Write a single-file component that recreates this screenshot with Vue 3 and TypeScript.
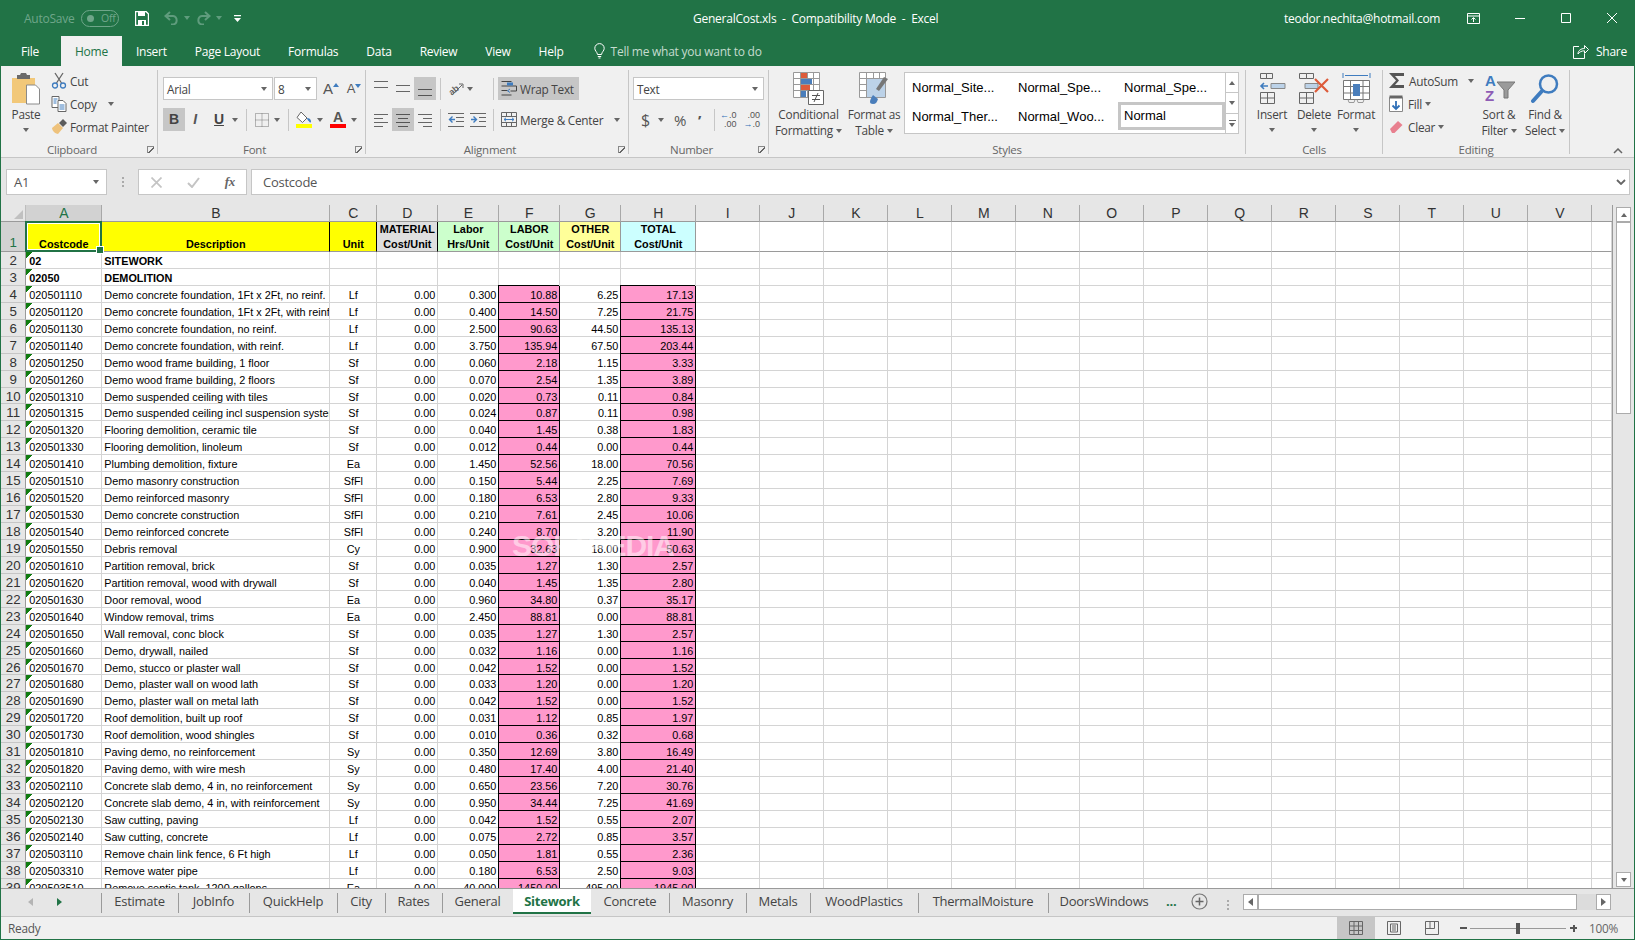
<template>
  <div class="app">
    <!-- title bar -->
    <header class="titlebar">
      <div class="qat">
        <span class="autosave">AutoSave</span>
        <span class="toggle"><i></i>Off</span>
        <svg class="save" width="14" height="15" viewBox="0 0 14 15"><path d="M.5.500h10.500l2.500 2.500v11.500h-13z" fill="none" stroke="#fff" stroke-width="1.400"/><path d="M3 1h7v4h-7zM3 9h8v5h-8z" fill="#fff"/><path d="M7 10h2v4h-2z" fill="#217346"/></svg>
        <svg class="undo" width="15" height="14" viewBox="0 0 15 14"><path d="M6 1L1.500 5 6 9M2 5h7a4.300 4.300 0 0 1 0 8.500H7" fill="none" stroke="#5f9c7d" stroke-width="2"/></svg>
        <i class="caret faded c1"></i>
        <svg class="redo" width="15" height="14" viewBox="0 0 15 14"><path d="M9 1l4.500 4L9 9M13 5H6a4.300 4.300 0 0 0 0 8.500h2" fill="none" stroke="#5f9c7d" stroke-width="2"/></svg>
        <i class="caret faded c2"></i>
        <svg class="customize" width="7" height="7" viewBox="0 0 7 7"><path d="M0 0h7v1.200H0zM0 3h7L3.500 7z" fill="#fff"/></svg>
      </div>
      <div class="doc-title">GeneralCost.xls&nbsp; - &nbsp;Compatibility Mode&nbsp; - &nbsp;Excel</div>
      <div class="win">
        <span class="email">teodor.nechita@hotmail.com</span>
        <svg class="disp" width="13" height="11" viewBox="0 0 13 11"><path d="M.5.500h12v10H.5zM.5 3h12M6.500 9V5M4.500 6.500l2-2 2 2" fill="none" stroke="#fff"/></svg>
        <svg class="wmin" width="10" height="1" viewBox="0 0 10 1"><path d="M0 .5h10" stroke="#fff"/></svg>
        <svg class="wmax" width="10" height="10" viewBox="0 0 10 10"><path d="M.5.500h9v9h-9z" fill="none" stroke="#fff"/></svg>
        <svg class="wclose" width="10" height="10" viewBox="0 0 10 10"><path d="M0 0l10 10M10 0L0 10" stroke="#fff"/></svg>
      </div>
    </header>

    <!-- ribbon tabs -->
    <nav class="tabs">
      <span class="tab first">File</span>
      <span class="tab active">Home</span>
      <span v-for="t in ribbonTabs" :key="t" class="tab">{{ t }}</span>
      <svg class="bulb" width="11" height="16" viewBox="0 0 11 16"><path d="M3.500 11.500C3 8.500.8 8 .8 5.300a4.700 4.700 0 0 1 9.400 0c0 2.700-2.200 3.200-2.700 6.200zM3.800 13.500h3.400M4.500 15h2" fill="none" stroke="#fff" stroke-width="1"/></svg>
      <span class="tellme">Tell me what you want to do</span>
      <span class="share">
        <svg width="16" height="15" viewBox="0 0 16 15"><path d="M6 2.500H.5v12h11V10M5 10c0-3.500 3-5.500 6.500-5.500V1.500l4 4-4 4V6.800C8.500 6.800 6.500 8 5 10z" fill="none" stroke="#fff"/></svg>
        Share
      </span>
    </nav>

    <!-- ribbon -->
    <section class="ribbon">
      <div class="group g-clip">
        <div class="body">
          <div class="big paste">
            <svg width="30" height="33" viewBox="0 0 30 33"><path d="M1 6h23v25H1z" fill="#f2c879"/><path d="M6 3h3l1-2h5l1 2h3v4H6z" fill="#6a6a6a"/><path d="M15.500 13h9l4 4v15h-13z" fill="#fff" stroke="#8a8a8a"/></svg>
            <span class="lbl">Paste</span>
            <i class="caret"></i>
          </div>
          <div class="clip-col">
            <div class="small">
              <svg width="15" height="17" viewBox="0 0 15 17"><path d="M3.500 1l6.500 10M11.500 1L5 11" stroke="#666" stroke-width="1.300"/><circle cx="3.500" cy="13.500" r="2.500" fill="none" stroke="#3f7cbf" stroke-width="1.300"/><circle cx="11.500" cy="13.500" r="2.500" fill="none" stroke="#3f7cbf" stroke-width="1.300"/></svg>
              <span>Cut</span>
            </div>
            <div class="small">
              <svg width="15" height="16" viewBox="0 0 15 16"><path d="M.5.500h7v11h-7z" fill="#fff" stroke="#666"/><path d="M6.500 4.500h5l3 3v8h-8z" fill="#fff" stroke="#666"/><path d="M8 9h5M8 11h5M8 13h5M2 3h4M2 5h3M2 7h3" stroke="#3f7cbf"/></svg>
              <span>Copy</span><i class="caret copy-caret"></i>
            </div>
            <div class="small">
              <svg width="16" height="15" viewBox="0 0 16 15"><path d="M1 9l6-5 5 5-5 6C5 15 1 12 1 9z" fill="#eec27c"/><path d="M8 4l4-4 4 4-4 4z" fill="#5c5c5c"/></svg>
              <span>Format Painter</span>
            </div>
          </div>
        </div>
        <div class="glabel launchable">Clipboard<i class="launch"></i></div>
      </div>

      <div class="group g-font">
        <div class="body rows">
          <div class="row">
            <div class="select font-name"><span>Arial</span><i class="caret"></i></div>
            <div class="select font-size"><span>8</span><i class="caret"></i></div>
            <span class="grow">A<i class="tri-up"></i></span>
            <span class="shrink">A<i class="tri-down"></i></span>
          </div>
          <div class="row">
            <span class="tbtn on bold">B</span>
            <span class="tbtn ital">I</span>
            <span class="tbtn under">U</span>
            <i class="caret u-caret"></i>
            <i class="sep s1"></i>
            <svg class="borders" width="14" height="14" viewBox="0 0 14 14"><path d="M.5.500h13v13H.5zM.5 7h13M7 .5v13" fill="none" stroke="#777" stroke-dasharray="1 1"/></svg>
            <i class="caret b-caret"></i>
            <i class="sep s2"></i>
            <span class="fill">
              <svg width="16" height="12" viewBox="0 0 16 12"><path d="M5 0l6 6-4.500 4.500L1 5.500z" fill="#fff" stroke="#666"/><path d="M11 6c2 0 4 1 4 3.500 0 1-1 1.500-1.500.5S11 8 11 6z" fill="#3f7cbf"/></svg>
              <i class="bar yellow"></i>
            </span>
            <i class="caret f-caret"></i>
            <span class="fcolor">A<i class="bar red"></i></span>
            <i class="caret a-caret"></i>
          </div>
        </div>
        <div class="glabel launchable">Font<i class="launch"></i></div>
      </div>

      <div class="group g-align">
        <div class="body rows">
          <div class="row">
            <svg class="al a-l" width="14" height="23" viewBox="0 0 14 23"><path d="M0 4.500h14M0 10.500h14" stroke="#666"/></svg>
            <svg class="al a-m" width="14" height="23" viewBox="0 0 14 23"><path d="M0 8.500h14M0 14.500h14" stroke="#666"/></svg>
            <span class="hl a-b"><svg width="14" height="23" viewBox="0 0 14 23"><path d="M0 12.500h14M0 18.500h14" stroke="#555"/></svg></span>
            <i class="sep s3"></i>
            <svg class="orient" width="16" height="14" viewBox="0 0 16 14"><text x="1" y="12" transform="rotate(-40 5 9)" class="ab">ab</text><path d="M4 13L14 3M11 2h4v4" fill="none" stroke="#666"/></svg>
            <i class="caret o-caret"></i>
            <i class="sep s4"></i>
            <span class="wrap hl">
              <svg width="16" height="15" viewBox="0 0 16 15"><path d="M.5.500h10M.5 5h15v5h-6M.5 9.500h6M.5 14h10" fill="none" stroke="#444"/><path d="M6 1.500h6v3H6z" fill="#3f7cbf"/><path d="M9 8l-2.500 1.800L9 11.500" fill="none" stroke="#3f7cbf"/></svg>
              <span>Wrap Text</span>
            </span>
          </div>
          <div class="row">
            <svg class="al a-l" width="14" height="23" viewBox="0 0 14 23"><path d="M0 6.500h14M0 10.500h9M0 14.500h14M0 18.500h9" stroke="#666"/></svg>
            <span class="hl a-c"><svg width="14" height="23" viewBox="0 0 14 23"><path d="M0 6.500h14M2 10.500h10M0 14.500h14M2 18.500h10" stroke="#555"/></svg></span>
            <svg class="al a-r" width="14" height="23" viewBox="0 0 14 23"><path d="M0 6.500h14M5 10.500h9M0 14.500h14M5 18.500h9" stroke="#666"/></svg>
            <i class="sep s3b"></i>
            <svg class="ind i1" width="16" height="14" viewBox="0 0 16 14"><path d="M0 .5h16M8 4.500h8M8 8.500h8M0 13.500h16" stroke="#666"/><path d="M7 6.500H2M4.500 3.500L1.500 6.500l3 3" fill="none" stroke="#3f7cbf" stroke-width="1.400"/></svg>
            <svg class="ind i2" width="16" height="14" viewBox="0 0 16 14"><path d="M0 .5h16M9 4.500h7M9 8.500h7M0 13.500h16" stroke="#666"/><path d="M1 6.500h5M3.500 3.500l3 3-3 3" fill="none" stroke="#3f7cbf" stroke-width="1.400"/></svg>
            <i class="sep s4b"></i>
            <span class="merge">
              <svg width="16" height="15" viewBox="0 0 16 15"><path d="M.5.500h15v14H.5zM.5 4.500h15M.5 10.500h15M5.500.5v4M10.500.5v4M5.500 10.500v4M10.500 10.500v4" fill="none" stroke="#666"/><path d="M3 7.500h10M5 5.800L3 7.500l2 1.700M11 5.800l2 1.700-2 1.700" fill="none" stroke="#3f7cbf"/></svg>
              <span>Merge &amp; Center</span>
              <i class="caret m-caret"></i>
            </span>
          </div>
        </div>
        <div class="glabel launchable">Alignment<i class="launch"></i></div>
      </div>

      <div class="group g-num">
        <div class="body rows">
          <div class="row">
            <div class="select num-fmt"><span>Text</span><i class="caret"></i></div>
          </div>
          <div class="row">
            <span class="dollar">$</span>
            <i class="caret d-caret"></i>
            <span class="pct">%</span>
            <span class="comma">’</span>
            <i class="sep s5"></i>
            <span class="dec d1"><b>←</b>.0<br />.00</span>
            <span class="dec d2">.00<br /><b>→</b>.0</span>
          </div>
        </div>
        <div class="glabel launchable">Number<i class="launch"></i></div>
      </div>

      <div class="group g-styles">
        <div class="body">
          <div class="big cf">
            <svg width="31" height="33" viewBox="0 0 31 33"><path d="M.5.500h26v25H.5zM.5 6.500h26M.5 12.500h26M.5 18.500h26M7.500.5v25M14.500.5v25M20.500.5v25" fill="#fff" stroke="#999"/><path d="M8 1h6v5H8zM8 13h9v5H8z" fill="#dd5b3a"/><path d="M8 7h11v5H8zM8 19h5v6H8z" fill="#4a7ebb"/><path d="M15.500 18.500h15v14h-15z" fill="#fff" stroke="#666"/><path d="M19 23.500h8M19 27.500h8M25 21l-4 9" fill="none" stroke="#555"/></svg>
            <span class="lbl">Conditional</span>
            <span class="lbl">Formatting<i class="caret"></i></span>
          </div>
          <div class="big fat">
            <svg width="31" height="33" viewBox="0 0 31 33"><path d="M.5.500h26v25H.5zM.5 6.500h26M.5 12.500h26M.5 18.500h26M7.500.5v25M14.500.5v25M20.500.5v25" fill="#fff" stroke="#999"/><path d="M8 7h18v18H8z" fill="#bcd2e8"/><path d="M29 7L20 19l-3-2 8-12z" fill="#777"/><path d="M14 32c-4 0-4-3 0-9l5 4c-1 3-2 5-5 5z" fill="#4a7ebb"/></svg>
            <span class="lbl">Format as</span>
            <span class="lbl">Table<i class="caret"></i></span>
          </div>
          <div class="gallery">
            <div class="g-items">
              <span v-for="(s, i) in galleryStyles" :key="i" class="g-item" :class="{ selected: s === 'Normal' }">{{ s }}</span>
            </div>
            <div class="g-spin">
              <span><i class="tri-up gray"></i></span>
              <span><i class="tri-down gray"></i></span>
              <span class="more"><i class="more-line"></i><i class="tri-down gray"></i></span>
            </div>
          </div>
        </div>
        <div class="glabel">Styles</div>
      </div>

      <div class="group g-cells">
        <div class="body">
          <div class="big c-ins">
            <svg width="27" height="33" viewBox="0 0 27 33"><path d="M1.500 1.500h6v5h-6zM7.500 1.500h6v5h-6zM1.500 20.500h14v11h-14zM1.500 26h14M8.500 20.500v11" fill="none" stroke="#666"/><path d="M12 11.500h14v5H12z" fill="#bcd2e8" stroke="#888"/><path d="M9 14H2M5 11l-3 3 3 3" fill="none" stroke="#3f7cbf" stroke-width="1.600"/></svg>
            <span class="lbl">Insert</span>
            <i class="caret"></i>
          </div>
          <div class="big c-del">
            <svg width="31" height="33" viewBox="0 0 31 33"><path d="M.5 1.500h7v5h-7zM7.500 1.500h7v5h-7zM.5 20.500h14v11H.5zM.5 26h14M7.500 20.500v11" fill="none" stroke="#666"/><path d="M6 11.500h13v5H6z" fill="#bcd2e8" stroke="#888"/><path d="M16 7l13 13M29 7L16 20" stroke="#dd5b3a" stroke-width="2.200"/></svg>
            <span class="lbl">Delete</span>
            <i class="caret"></i>
          </div>
          <div class="big c-fmt">
            <svg width="29" height="33" viewBox="0 0 29 33"><path d="M1 1v5M28 1v5M3 3.500h23" stroke="#3f7cbf"/><path d="M1.500 8.500h26v19h-26zM1.500 14.500h26M1.500 21h26M8.500 8.500v19M21 8.500v19" fill="#fff" stroke="#777"/><path d="M11 12h7v12h-7z" fill="#4a7ebb"/><path d="M6 27.500l1 3h5l1-3M15 27.500l1 3h5l1-3" fill="none" stroke="#999"/></svg>
            <span class="lbl">Format</span>
            <i class="caret"></i>
          </div>
        </div>
        <div class="glabel">Cells</div>
      </div>

      <div class="group g-edit">
        <div class="body">
          <div class="edit-col">
            <div class="small">
              <svg width="15" height="15" viewBox="0 0 15 15"><path d="M15 3V0H0l7 7.500L0 15h15v-3H6l4-4.500L6 3z" fill="#555"/></svg>
              <span>AutoSum</span><i class="caret sum-caret"></i>
            </div>
            <div class="small">
              <svg width="14" height="17" viewBox="0 0 14 17"><path d="M.5 2.500h13v14H.5z" fill="#fff" stroke="#888"/><path d="M.5 .5h13v3H.5z" fill="#666"/><path d="M7 6v8M3.500 10.500L7 14l3.500-3.500" fill="none" stroke="#2f6fb7" stroke-width="1.800"/></svg>
              <span>Fill</span><i class="caret near"></i>
            </div>
            <div class="small">
              <svg width="14" height="14" viewBox="0 0 14 14"><path d="M1 9l8-8 4.500 4-8 8H3z" fill="#e8808f"/></svg>
              <span>Clear</span><i class="caret near"></i>
            </div>
          </div>
          <div class="big e-sort">
            <svg width="31" height="33" viewBox="0 0 31 33"><path d="M13 10h18l-7 8v8h-4v-8z" fill="#9a9a9a" stroke="#777"/><text x="1" y="14" class="az a">A</text><text x="1" y="29" class="az z">Z</text></svg>
            <span class="lbl">Sort &amp;</span>
            <span class="lbl">Filter<i class="caret"></i></span>
          </div>
          <div class="big e-find">
            <svg width="28" height="31" viewBox="0 0 28 31"><circle cx="17.500" cy="11" r="8.500" fill="none" stroke="#3f7cbf" stroke-width="2.500"/><path d="M11 18L2 28" stroke="#3f7cbf" stroke-width="4" stroke-linecap="round"/></svg>
            <span class="lbl">Find &amp;</span>
            <span class="lbl">Select<i class="caret"></i></span>
          </div>
        </div>
        <div class="glabel">Editing</div>
      </div>

      <div class="collapse">
        <svg width="10" height="6" viewBox="0 0 10 6"><path d="M1 5l4-4 4 4" fill="none" stroke="#666" stroke-width="1.500"/></svg>
      </div>
    </section>

    <!-- formula bar -->
    <div class="formula">
      <div class="namebox"><span>A1</span><i class="caret"></i></div>
      <span class="dots"></span>
      <div class="fx-box">
        <svg width="11" height="11" viewBox="0 0 11 11"><path d="M.5.500l10 10M10.500.5l-10 10" stroke="#c4c4c4" stroke-width="1.700"/></svg>
        <svg width="13" height="11" viewBox="0 0 13 11"><path d="M1 6l4 4 7-9" fill="none" stroke="#c4c4c4" stroke-width="2"/></svg>
        <span class="fx">fx</span>
      </div>
      <div class="finput"><span>Costcode</span>
        <svg width="10" height="6" viewBox="0 0 10 6"><path d="M1 1l4 4 4-4" fill="none" stroke="#666" stroke-width="1.800"/></svg>
      </div>
    </div>

    <!-- sheet -->
    <div class="sheet-wrap">
      <div class="sheet">
        <div class="grid">
          <div class="corner"><i></i></div>
          <div v-for="c in colNames" :key="c" class="colhead" :class="{ sel: c === 'A' }">{{ c }}</div>
          <div class="colhead blank"></div>

          <div class="rowhead r1 sel">1</div>
          <div
            v-for="h in headers"
            :key="h.col"
            class="cell head"
            :class="[h.cls, { 'active-cell': h.col === 'A' }]"
          >
            <span v-for="l in h.lines" :key="l">{{ l }}</span>
          </div>
          <div v-for="n in 15" :key="'h' + n" class="cell head"></div>

          <template v-for="(r, i) in rows" :key="r.code">
            <div class="rowhead">{{ i + 2 }}</div>
            <div class="cell code" :class="{ strong: r.bold }">{{ r.code }}</div>
            <div class="cell" :class="{ strong: r.bold }">{{ r.desc }}</div>
            <div class="cell center">{{ r.unit }}</div>
            <div class="cell num">{{ r.bold ? '' : '0.00' }}</div>
            <div class="cell num">{{ r.hrs }}</div>
            <div class="cell num" :class="{ pink: !r.bold }">{{ r.labor }}</div>
            <div class="cell num">{{ r.other }}</div>
            <div class="cell num" :class="{ pink: !r.bold }">{{ r.total }}</div>
            <div v-for="n in 15" :key="n" class="cell"></div>
          </template>
        </div>
        <div class="watermark">SOFTPEDIA</div>
      </div>
      <div class="vscroll">
        <span class="sbtn"><i class="tri-up gray"></i></span>
        <span class="vthumb"></span>
        <span class="vtrack"></span>
        <span class="sbtn"><i class="tri-down gray"></i></span>
      </div>
    </div>

    <!-- sheet tabs -->
    <div class="sheetbar">
      <div class="arrows"><i class="tri-left"></i><i class="tri-right"></i></div>
      <span
        v-for="t in sheets"
        :key="t.name"
        class="stab"
        :class="{ active: t.name === 'Sitework' }"
        :style="{ width: t.w + 'px' }"
      >{{ t.name }}</span>
      <span class="more-tabs">...</span>
      <span class="add">
        <svg width="17" height="17" viewBox="0 0 17 17"><circle cx="8.500" cy="8.500" r="7.500" fill="none" stroke="#777" stroke-width="1.200"/><path d="M4.500 8.500h8M8.500 4.500v8" stroke="#666" stroke-width="1.500"/></svg>
      </span>
      <span class="dots small-dots"></span>
      <div class="hscroll">
        <span class="sbtn"><i class="tri-left gray"></i></span>
        <span class="hthumb"></span>
        <span class="htrack"></span>
        <span class="sbtn last"><i class="tri-right gray"></i></span>
      </div>
    </div>

    <!-- status bar -->
    <footer class="status">
      <span class="ready">Ready</span>
      <span class="viewbtn on">
        <svg width="14" height="14" viewBox="0 0 14 14"><path d="M.5.500h13v13H.5zM.5 5h13M.5 9.500h13M5 .5v13M9.500.5v13" fill="none" stroke="#666"/></svg>
      </span>
      <span class="viewbtn">
        <svg width="14" height="14" viewBox="0 0 14 14"><path d="M.5.500h13v13H.5z" fill="none" stroke="#666"/><path d="M3.500 3v8h7V3zM5 5h4M5 7h4M5 9h4" fill="none" stroke="#666"/></svg>
      </span>
      <span class="viewbtn">
        <svg width="14" height="14" viewBox="0 0 14 14"><path d="M.5.500h13v13H.5zM.5 7.500h9V.5M5 .5v7" fill="none" stroke="#666"/></svg>
      </span>
      <span class="zminus"></span>
      <span class="slider"><i></i></span>
      <span class="zplus"></span>
      <span class="zoomtxt">100%</span>
    </footer>
  </div>
</template>

<script setup lang="ts">
interface SheetRow {
  code: string
  desc: string
  unit: string
  hrs: string
  labor: string
  other: string
  total: string
  bold?: boolean
}

const ribbonTabs = ['Insert', 'Page Layout', 'Formulas', 'Data', 'Review', 'View', 'Help']
const galleryStyles = ['Normal_Site...', 'Normal_Spe...', 'Normal_Spe...', 'Normal_Ther...', 'Normal_Woo...', 'Normal']
const colNames = 'ABCDEFGHIJKLMNOPQRSTUV'.split('')

const headers = [
  { col: 'A', cls: 'yellow', lines: ['Costcode'] },
  { col: 'B', cls: 'yellow dark', lines: ['Description'] },
  { col: 'C', cls: 'yellow dark', lines: ['Unit'] },
  { col: 'D', cls: 'grey', lines: ['MATERIAL', 'Cost/Unit'] },
  { col: 'E', cls: 'green', lines: ['Labor', 'Hrs/Unit'] },
  { col: 'F', cls: 'green', lines: ['LABOR', 'Cost/Unit'] },
  { col: 'G', cls: 'lemon', lines: ['OTHER', 'Cost/Unit'] },
  { col: 'H', cls: 'cyan', lines: ['TOTAL', 'Cost/Unit'] },
]

const data = `020501110|Demo concrete foundation, 1Ft x 2Ft, no reinf.|Lf|0.300|10.88|6.25|17.13
020501120|Demo concrete foundation, 1Ft x 2Ft, with reinf.|Lf|0.400|14.50|7.25|21.75
020501130|Demo concrete foundation, no reinf.|Lf|2.500|90.63|44.50|135.13
020501140|Demo concrete foundation, with reinf.|Lf|3.750|135.94|67.50|203.44
020501250|Demo wood frame building, 1 floor|Sf|0.060|2.18|1.15|3.33
020501260|Demo wood frame building, 2 floors|Sf|0.070|2.54|1.35|3.89
020501310|Demo suspended ceiling with tiles|Sf|0.020|0.73|0.11|0.84
020501315|Demo suspended ceiling incl suspension system|Sf|0.024|0.87|0.11|0.98
020501320|Flooring demolition, ceramic tile|Sf|0.040|1.45|0.38|1.83
020501330|Flooring demolition, linoleum|Sf|0.012|0.44|0.00|0.44
020501410|Plumbing demolition, fixture|Ea|1.450|52.56|18.00|70.56
020501510|Demo masonry construction|SfFl|0.150|5.44|2.25|7.69
020501520|Demo reinforced masonry|SfFl|0.180|6.53|2.80|9.33
020501530|Demo concrete construction|SfFl|0.210|7.61|2.45|10.06
020501540|Demo reinforced concrete|SfFl|0.240|8.70|3.20|11.90
020501550|Debris removal|Cy|0.900|32.63|18.00|50.63
020501610|Partition removal, brick|Sf|0.035|1.27|1.30|2.57
020501620|Partition removal, wood with drywall|Sf|0.040|1.45|1.35|2.80
020501630|Door removal, wood|Ea|0.960|34.80|0.37|35.17
020501640|Window removal, trims|Ea|2.450|88.81|0.00|88.81
020501650|Wall removal, conc block|Sf|0.035|1.27|1.30|2.57
020501660|Demo, drywall, nailed|Sf|0.032|1.16|0.00|1.16
020501670|Demo, stucco or plaster wall|Sf|0.042|1.52|0.00|1.52
020501680|Demo, plaster wall on wood lath|Sf|0.033|1.20|0.00|1.20
020501690|Demo, plaster wall on metal lath|Sf|0.042|1.52|0.00|1.52
020501720|Roof demolition, built up roof|Sf|0.031|1.12|0.85|1.97
020501730|Roof demolition, wood shingles|Sf|0.010|0.36|0.32|0.68
020501810|Paving demo, no reinforcement|Sy|0.350|12.69|3.80|16.49
020501820|Paving demo, with wire mesh|Sy|0.480|17.40|4.00|21.40
020502110|Concrete slab demo, 4 in, no reinforcement|Sy|0.650|23.56|7.20|30.76
020502120|Concrete slab demo, 4 in, with reinforcement|Sy|0.950|34.44|7.25|41.69
020502130|Saw cutting, paving|Lf|0.042|1.52|0.55|2.07
020502140|Saw cutting, concrete|Lf|0.075|2.72|0.85|3.57
020503110|Remove chain link fence, 6 Ft high|Lf|0.050|1.81|0.55|2.36
020503310|Remove water pipe|Lf|0.180|6.53|2.50|9.03
020503510|Remove septic tank, 1200 gallons|Ea|40.000|1450.00|495.00|1945.00`

const rows: SheetRow[] = [
  { code: '02', desc: 'SITEWORK', unit: '', hrs: '', labor: '', other: '', total: '', bold: true },
  { code: '02050', desc: 'DEMOLITION', unit: '', hrs: '', labor: '', other: '', total: '', bold: true },
  ...data.split('\n').map((line) => {
    const [code, desc, unit, hrs, labor, other, total] = line.split('|')
    return { code, desc, unit, hrs, labor, other, total }
  }),
]

// tab widths read off the screenshot
const sheets = [
  { name: 'Estimate', w: 77 },
  { name: 'JobInfo', w: 71 },
  { name: 'QuickHelp', w: 88 },
  { name: 'City', w: 48 },
  { name: 'Rates', w: 57 },
  { name: 'General', w: 71 },
  { name: 'Sitework', w: 78 },
  { name: 'Concrete', w: 78 },
  { name: 'Masonry', w: 77 },
  { name: 'Metals', w: 64 },
  { name: 'WoodPlastics', w: 108 },
  { name: 'ThermalMoisture', w: 130 },
  { name: 'DoorsWindows', w: 112 },
]
</script>

<style>
html,
body {
  margin: 0;
  overflow: hidden;
}
</style>

<style scoped>
.app {
  width: 1635px;
  height: 940px;
  display: flex;
  flex-direction: column;
  background: #e6e6e6;
  font-family: 'Open Sans', 'Noto Sans', sans-serif;
  font-size: 11.800px;
  letter-spacing: -0.25px;
  color: #444;
  overflow: hidden;
  box-sizing: border-box;
  border: solid #217346;
  border-width: 0 1px 1px 1px;
}
.app * {
  box-sizing: border-box;
}
i {
  display: inline-block;
  font-style: normal;
}

.caret {
  width: 0;
  height: 0;
  border-left: 3.500px solid transparent;
  border-right: 3.500px solid transparent;
  border-top: 4px solid #666;
}
.caret.faded {
  border-top-color: #5f9c7d;
}
.tri-up,
.tri-down {
  width: 0;
  height: 0;
  border-left: 3.500px solid transparent;
  border-right: 3.500px solid transparent;
}
.tri-up {
  border-bottom: 4px solid #3f7cbf;
}
.tri-down {
  border-top: 4px solid #3f7cbf;
}
.tri-up.gray {
  border-bottom-color: #666;
}
.tri-down.gray {
  border-top-color: #666;
}
.tri-left,
.tri-right {
  width: 0;
  height: 0;
  border-top: 4px solid transparent;
  border-bottom: 4px solid transparent;
}
.tri-left {
  border-right: 5px solid #b4b4b4;
}
.tri-right {
  border-left: 5px solid #217346;
}
.tri-left.gray {
  border-right-color: #666;
}
.tri-right.gray {
  border-left-color: #666;
}

/* title bar */
.titlebar {
  height: 36px;
  flex: none;
  display: flex;
  align-items: center;
  background: #217346;
  color: #fff;
  margin: 0 -1px;
  font-size: 12px;
}
.qat {
  width: 693px;
  display: flex;
  align-items: center;
}
.autosave {
  margin-left: 24px;
  width: 57px;
  color: #6fa68a;
}
.toggle {
  width: 38px;
  height: 17px;
  border: 1px solid #6fa68a;
  border-radius: 9px;
  color: #6fa68a;
  font-size: 10.500px;
  line-height: 15px;
  padding-left: 19px;
  position: relative;
}
.toggle i {
  position: absolute;
  left: 5px;
  top: 4px;
  width: 7px;
  height: 7px;
  border-radius: 50%;
  background: #6fa68a;
}
.save {
  margin-left: 16px;
}
.undo {
  margin-left: 15px;
}
.c1 {
  margin-left: 5px;
}
.redo {
  margin-left: 6px;
}
.c2 {
  margin-left: 5px;
}
.customize {
  margin-left: 12px;
}
.doc-title {
  width: 300px;
  white-space: nowrap;
}
.win {
  flex: 1;
  display: flex;
  align-items: center;
}
.email {
  margin-left: 291px;
  width: 157px;
  white-space: nowrap;
}
.disp {
  margin-left: 26px;
}
.wmin {
  margin-left: 35px;
}
.wmax {
  margin-left: 36px;
}
.wclose {
  margin-left: 36px;
}

/* tabs */
.tabs {
  height: 30px;
  flex: none;
  display: flex;
  align-items: stretch;
  background: #217346;
  color: #fff;
  margin: 0 -1px;
  font-size: 12px;
}
.tab {
  padding: 0 14px;
  line-height: 32px;
}
.tab.first {
  padding: 0 22px 0 21px;
}
.tab.active {
  background: #f0f0f0;
  color: #217346;
}
.bulb {
  margin: 7px 0 0 16px;
}
.tellme {
  margin-left: 6px;
  line-height: 32px;
  color: #c5dccf;
}
.share {
  margin-left: auto;
  margin-right: 8px;
  display: flex;
  align-items: center;
  gap: 7px;
}

/* ribbon */
.ribbon {
  height: 92px;
  flex: none;
  display: flex;
  background: #f0f0f0;
  border-bottom: 1px solid #c6c6c6;
  padding-top: 4px;
}
.group {
  height: 84px;
  display: flex;
  flex-direction: column;
  border-right: 1px solid #c6c6c6;
  flex: none;
}
.g-clip {
  width: 157px;
}
.g-font {
  width: 208px;
}
.g-align {
  width: 263px;
}
.g-num {
  width: 140px;
}
.g-styles {
  width: 477px;
}
.g-cells {
  width: 137px;
}
.g-edit {
  width: 187px;
}
.body {
  flex: 1;
  display: flex;
  min-height: 0;
}
.glabel {
  height: 16px;
  margin-bottom: -4px;
  line-height: 16px;
  text-align: center;
  color: #666;
  position: relative;
  font-size: 11.500px;
}
.glabel.launchable {
  padding-right: 14px;
}
.launch {
  position: absolute;
  right: 3px;
  top: 4px;
  width: 7px;
  height: 7px;
  border: 1px solid #888;
  border-width: 1px 0 0 1px;
  background: linear-gradient(135deg, transparent 45%, #666 45%, #666 60%, transparent 60%);
}
.big {
  display: flex;
  flex-direction: column;
  align-items: center;
  flex: none;
}
.big svg {
  height: 33px;
  margin: 2px 0 1px;
  flex: none;
}
.lbl {
  line-height: 16px;
  white-space: nowrap;
}
.lbl .caret {
  margin-left: 3px;
  vertical-align: 2px;
}
.big > .caret {
  margin-top: 6px;
}
.paste {
  width: 50px;
}
.clip-col,
.edit-col {
  display: flex;
  flex-direction: column;
  margin-top: -1px;
}
.small {
  height: 23px;
  display: flex;
  align-items: center;
  white-space: nowrap;
}
.clip-col .small svg {
  flex: none;
  width: 16px;
  margin-right: 3px;
}
.copy-caret {
  margin-left: 11px;
}

.rows {
  flex-direction: column;
  padding-top: 7px;
  gap: 8px;
}
.row {
  height: 23px;
  display: flex;
  align-items: center;
  flex: none;
  position: relative;
}
.select {
  height: 23px;
  background: #fff;
  border: 1px solid #c6c6c6;
  display: flex;
  align-items: center;
  justify-content: space-between;
  padding: 0 5px 0 3px;
  color: #444;
}
.font-name {
  width: 110px;
  margin-left: 5px;
}
.font-size {
  width: 43px;
  margin-left: 1px;
}
.grow,
.shrink {
  font-size: 15px;
  color: #555;
  display: flex;
  align-items: flex-start;
  font-family: 'Liberation Sans', sans-serif;
}
.grow {
  margin-left: 6px;
}
.shrink {
  margin-left: 8px;
  font-size: 13px;
}
.grow i,
.shrink i {
  margin-top: 3px;
}
.tbtn {
  height: 23px;
  line-height: 23px;
  text-align: center;
  font-size: 14px;
  font-family: 'Liberation Sans', sans-serif;
  color: #444;
}
.tbtn.on {
  background: #c6c6c6;
}
.bold {
  width: 22px;
  margin-left: 5px;
  font-weight: 700;
}
.ital {
  width: 10px;
  margin-left: 5px;
  font-style: italic;
  font-weight: 700;
  color: #555;
}
.under {
  width: 12px;
  margin-left: 13px;
  font-weight: 700;
  text-decoration: underline;
}
.u-caret {
  margin-left: 7px;
}
.sep {
  width: 1px;
  height: 22px;
  background: #c6c6c6;
  flex: none;
}
.s1 {
  margin-left: 8px;
}
.borders {
  margin-left: 8px;
}
.b-caret {
  margin-left: 5px;
}
.s2 {
  margin-left: 8px;
}
.fill {
  margin-left: 7px;
  width: 16px;
  display: flex;
  flex-direction: column;
  align-items: center;
}
.bar {
  display: block;
  height: 4px;
  width: 16px;
}
.bar.yellow {
  background: #ffff00;
}
.bar.red {
  background: #ff0000;
}
.f-caret {
  margin-left: 5px;
}
.fcolor {
  margin-left: 7px;
  width: 16px;
  display: flex;
  flex-direction: column;
  align-items: center;
  font-size: 14px;
  line-height: 13px;
  font-weight: 700;
  font-family: 'Liberation Sans', sans-serif;
  color: #555;
}
.a-caret {
  margin-left: 5px;
}
.al {
  flex: none;
}
.a-l {
  margin-left: 8px;
}
.a-m {
  margin-left: 8px;
}
.hl {
  background: #c6c6c6;
  height: 23px;
  display: flex;
  align-items: center;
  justify-content: center;
}
.a-b {
  width: 22px;
  margin-left: 4px;
}
.s3 {
  margin-left: 4px;
}
.orient {
  margin-left: 7px;
}
.ab {
  font: 700 9px 'Liberation Sans', sans-serif;
  fill: #666;
}
.o-caret {
  margin-left: 3px;
}
.s4 {
  margin-left: 20px;
}
.wrap {
  width: 81px;
  margin-left: 4px;
  justify-content: flex-start;
  padding-left: 3px;
  gap: 3px;
  white-space: nowrap;
}
.a-c {
  width: 22px;
  margin-left: 4px;
}
.a-r {
  margin-left: 4px;
}
.s3b {
  margin-left: 8px;
}
.i1 {
  margin-left: 7px;
}
.i2 {
  margin-left: 6px;
}
.s4b {
  margin-left: 7px;
}
.merge {
  margin-left: 7px;
  display: flex;
  align-items: center;
  gap: 3px;
  white-space: nowrap;
}
.m-caret {
  margin-left: 8px;
}
.num-fmt {
  width: 131px;
  margin-left: 4px;
}
.dollar {
  margin-left: 12px;
  font-size: 16px;
  color: #555;
}
.d-caret {
  margin-left: 8px;
}
.pct {
  margin-left: 10px;
  font-size: 15px;
  color: #555;
}
.comma {
  margin-left: 12px;
  font-size: 15px;
  font-weight: 700;
  color: #555;
  line-height: 14px;
}
.s5 {
  margin-left: 13px;
}
.dec {
  font-size: 9px;
  line-height: 9px;
  text-align: right;
  color: #555;
  font-family: 'Liberation Sans', sans-serif;
  letter-spacing: 0;
}
.dec b {
  color: #2f6fb7;
}
.d1 {
  margin-left: 5px;
}
.d2 {
  margin-left: 7px;
}
.cf {
  width: 63px;
  margin-left: 8px;
}
.fat {
  width: 52px;
  margin-left: 8px;
}
.gallery {
  margin: 2px 0 0 4px;
  width: 335px;
  height: 62px;
  background: #fff;
  border: 1px solid #c6c6c6;
  display: flex;
}
.g-items {
  flex: 1;
  display: grid;
  grid-template-columns: 106px 106px 108px;
  grid-template-rows: 29px 28px;
  font-family: 'Liberation Sans', sans-serif;
  font-size: 13px;
  letter-spacing: 0;
  color: #000;
  align-items: center;
}
.g-item {
  padding-left: 7px;
  white-space: nowrap;
}
.g-item.selected {
  height: 28px;
  line-height: 22px;
  border: 3px solid #c6c6c6;
  padding-left: 3px;
  margin-left: 1px;
}
.g-spin {
  width: 14px;
  border-left: 1px solid #c6c6c6;
  display: flex;
  flex-direction: column;
}
.g-spin span {
  flex: 1;
  display: flex;
  flex-direction: column;
  align-items: center;
  justify-content: center;
  gap: 2px;
  border-bottom: 1px solid #c6c6c6;
}
.g-spin span:last-child {
  border-bottom: 0;
}
.more-line {
  width: 7px;
  height: 1px;
  background: #666;
}
.c-ins {
  width: 34px;
  margin-left: 9px;
}
.c-del {
  width: 34px;
  margin-left: 8px;
}
.c-fmt {
  width: 38px;
  margin-left: 6px;
}
.edit-col {
  width: 92px;
  margin-left: 6px;
}
.edit-col .small svg {
  flex: none;
  margin-right: 5px;
}
.sum-caret {
  margin-left: 10px;
}
.near {
  margin-left: 3px;
}
.e-sort {
  width: 36px;
}
.e-find {
  width: 38px;
  margin-left: 9px;
}
.az {
  font: 700 15px 'Liberation Sans', sans-serif;
}
.az.a {
  fill: #3f7cbf;
}
.az.z {
  fill: #8e5cb5;
}
.collapse {
  flex: 1;
  display: flex;
  justify-content: flex-end;
  align-items: flex-end;
  padding: 0 11px 3px 0;
}

/* formula bar */
.formula {
  height: 47px;
  flex: none;
  display: flex;
  padding: 11px 4px 10px 5px;
  align-items: stretch;
}
.namebox {
  width: 101px;
  background: #fff;
  border: 1px solid #c6c6c6;
  display: flex;
  align-items: center;
  justify-content: space-between;
  padding: 0 7px;
  font-size: 13px;
  color: #555;
}
.dots {
  width: 2px;
  align-self: center;
  height: 10px;
  margin: 0 14px 0 15px;
  background: repeating-linear-gradient(#aaa 0 2px, transparent 2px 4px);
}
.fx-box {
  width: 109px;
  background: #fff;
  border: 1px solid #c6c6c6;
  display: flex;
  align-items: center;
  padding: 0 11px 0 12px;
  justify-content: space-between;
}
.fx {
  font: italic 700 13px 'Liberation Serif', serif;
  color: #666;
}
.finput {
  flex: 1;
  margin-left: 4px;
  background: #fff;
  border: 1px solid #c6c6c6;
  display: flex;
  align-items: center;
  justify-content: space-between;
  padding: 0 3px 0 11px;
  font-size: 13px;
  color: #555;
}

/* sheet */
.sheet-wrap {
  flex: 1 1 0;
  min-height: 0;
  display: flex;
  background: #e6e6e6;
  border-bottom: 1px solid #9a9a9a;
}
.sheet {
  width: 1612px;
  background: #fff;
  overflow: hidden;
  border-right: 1px solid #9a9a9a;
  position: relative;
  flex: none;
}
.grid {
  display: grid;
  grid-template-columns: 25.300px 76px 228px 47px 61px 61px 61px 61px 75px repeat(14, 64px) 20px;
  grid-auto-rows: 16.950px;
  grid-template-rows: 17px 30px;
  font-family: 'Liberation Sans', Arial, sans-serif;
  font-size: 10.850px;
  letter-spacing: 0;
  color: #000;
}
.corner {
  background: #e6e6e6;
  border-bottom: 1px solid #9a9a9a;
  border-right: 1px solid #bdbdbd;
  position: relative;
}
.corner i {
  position: absolute;
  right: 2px;
  bottom: 2px;
  width: 0;
  height: 0;
  border-left: 9px solid transparent;
  border-bottom: 9px solid #c0c0c0;
}
.colhead {
  background: #e6e6e6;
  border-bottom: 1px solid #9a9a9a;
  border-right: 1px solid #a8a8a8;
  text-align: center;
  font-size: 14px;
  line-height: 17px;
  color: #333;
}
.colhead.blank {
  border-right: 0;
}
.colhead.sel,
.rowhead.sel {
  background: #d2d2d2;
  color: #217346;
}
.rowhead {
  background: #e6e6e6;
  border-right: 1px solid #9a9a9a;
  border-bottom: 1px solid #c6c6c6;
  text-align: center;
  font-size: 13.300px;
  line-height: 18px;
  color: #333;
}
.rowhead.r1 {
  line-height: 42px;
  overflow: hidden;
  border-bottom-color: #9a9a9a;
}
.cell {
  border-right: 1px solid #d4d4d4;
  border-bottom: 1px solid #d4d4d4;
  overflow: hidden;
  white-space: nowrap;
  padding: 1px 2px 0;
  line-height: 17px;
  min-width: 0;
}
.cell.code {
  padding-left: 3px;
  background: linear-gradient(135deg, #107c10 0 4.500px, transparent 4.500px) no-repeat;
}
.strong {
  font-weight: 700;
}
.num {
  text-align: right;
  padding-right: 2px;
}
.center {
  text-align: center;
}
.pink {
  background: #ff99cc;
  border-right: 1px solid #000;
  border-bottom: 1px solid #000;
  box-shadow: -1px -1px 0 #000;
}
.head {
  display: flex;
  flex-direction: column;
  justify-content: flex-end;
  align-items: center;
  line-height: 15px;
  font-weight: 700;
  padding: 0;
  border-bottom: 1px solid #9a9a9a;
  overflow: visible;
}
.head span {
  transform: translateY(1px);
}
.head.yellow {
  background: #ffff00;
  border-right-color: #ffff00;
}
.head.dark {
  border-right: 1px solid #000;
}
.head.grey {
  background: #dfdfdf;
  border-right-color: #000;
}
.head.green {
  background: #ccffcc;
  border-right-color: #999;
}
.head.lemon {
  background: #ffff99;
  border-right-color: #999;
}
.head.cyan {
  background: #ccffff;
  border-right-color: #999;
}
.active-cell {
  position: relative;
}
.cell.active-cell::after {
  content: '';
  position: absolute;
  left: -1px;
  top: -1px;
  right: -1px;
  bottom: -1px;
  border: 2px solid #217346;
  box-shadow: inset 0 0 0 1px #fff;
}
.cell.active-cell::before {
  content: '';
  position: absolute;
  right: -3px;
  bottom: -3px;
  width: 6px;
  height: 6px;
  background: #217346;
  border: 1px solid #fff;
  z-index: 1;
}
.watermark {
  position: absolute;
  left: 511px;
  top: 324px;
  font: 700 30px 'Liberation Sans', sans-serif;
  color: rgba(255, 255, 255, 0.5);
  letter-spacing: -1.100px;
  pointer-events: none;
}
.vscroll {
  flex: 1;
  display: flex;
  flex-direction: column;
  align-items: center;
  padding: 2px 0 1px;
}
.sbtn {
  width: 15px;
  height: 15px;
  background: #fff;
  border: 1px solid #ababab;
  display: flex;
  align-items: center;
  justify-content: center;
  flex: none;
}
.vthumb {
  width: 15px;
  height: 192px;
  background: #fff;
  border: 1px solid #ababab;
  flex: none;
}
.vtrack {
  flex: 1;
}

/* sheet tabs */
.sheetbar {
  height: 28px;
  flex: none;
  display: flex;
  align-items: flex-start;
  border-bottom: 1px solid #c6c6c6;
  font-size: 13px;
}
.arrows {
  width: 100px;
  height: 25px;
  display: flex;
  align-items: center;
  padding-left: 27px;
  gap: 24px;
}
.stab {
  height: 25px;
  line-height: 24px;
  text-align: center;
  position: relative;
  color: #444;
  white-space: nowrap;
}
.stab::before {
  content: '';
  position: absolute;
  left: 0;
  top: 4px;
  height: 20px;
  width: 1px;
  background: #9a9a9a;
}
.stab.active {
  background: #fff;
  color: #217346;
  font-weight: 700;
  border-bottom: 2px solid #217346;
}
.stab.active::before,
.stab.active + .stab::before {
  display: none;
}
.more-tabs {
  margin-left: 6px;
  width: 12px;
  line-height: 24px;
  color: #217346;
  font-weight: 700;
}
.add {
  margin-left: 13px;
  margin-top: 4px;
  display: flex;
}
.small-dots {
  margin: 7px 14px 0 19px;
  height: 12px;
}
.hscroll {
  width: 368px;
  height: 16px;
  margin-top: 5px;
  display: flex;
  align-items: stretch;
}
.hscroll .sbtn {
  height: 16px;
}
.hthumb {
  width: 319px;
  background: #fff;
  border: 1px solid #ababab;
}
.htrack {
  width: 19px;
  background: #dcdcdc;
}

/* status */
.status {
  height: 22px;
  flex: none;
  display: flex;
  align-items: stretch;
  background: #f0f0f0;
}
.ready {
  margin-left: 7px;
  line-height: 22px;
  width: 1329px;
  color: #555;
}
.viewbtn {
  width: 38px;
  display: flex;
  align-items: center;
  justify-content: center;
}
.viewbtn.on {
  background: #c6c6c6;
}
.zminus,
.zplus {
  width: 7px;
  align-self: center;
  height: 2px;
  background: #555;
  position: relative;
}
.zminus {
  margin-left: 9px;
}
.zplus {
  margin-left: 4px;
}
.zplus::after {
  content: '';
  position: absolute;
  left: 2.500px;
  top: -2.500px;
  width: 2px;
  height: 7px;
  background: #555;
}
.slider {
  width: 96px;
  margin-left: 3px;
  align-self: center;
  height: 1px;
  background: #999;
  position: relative;
}
.slider i {
  position: absolute;
  left: 46px;
  top: -5px;
  width: 4px;
  height: 11px;
  background: #555;
}
.zoomtxt {
  margin-left: 12px;
  line-height: 22px;
  color: #666;
}
</style>
